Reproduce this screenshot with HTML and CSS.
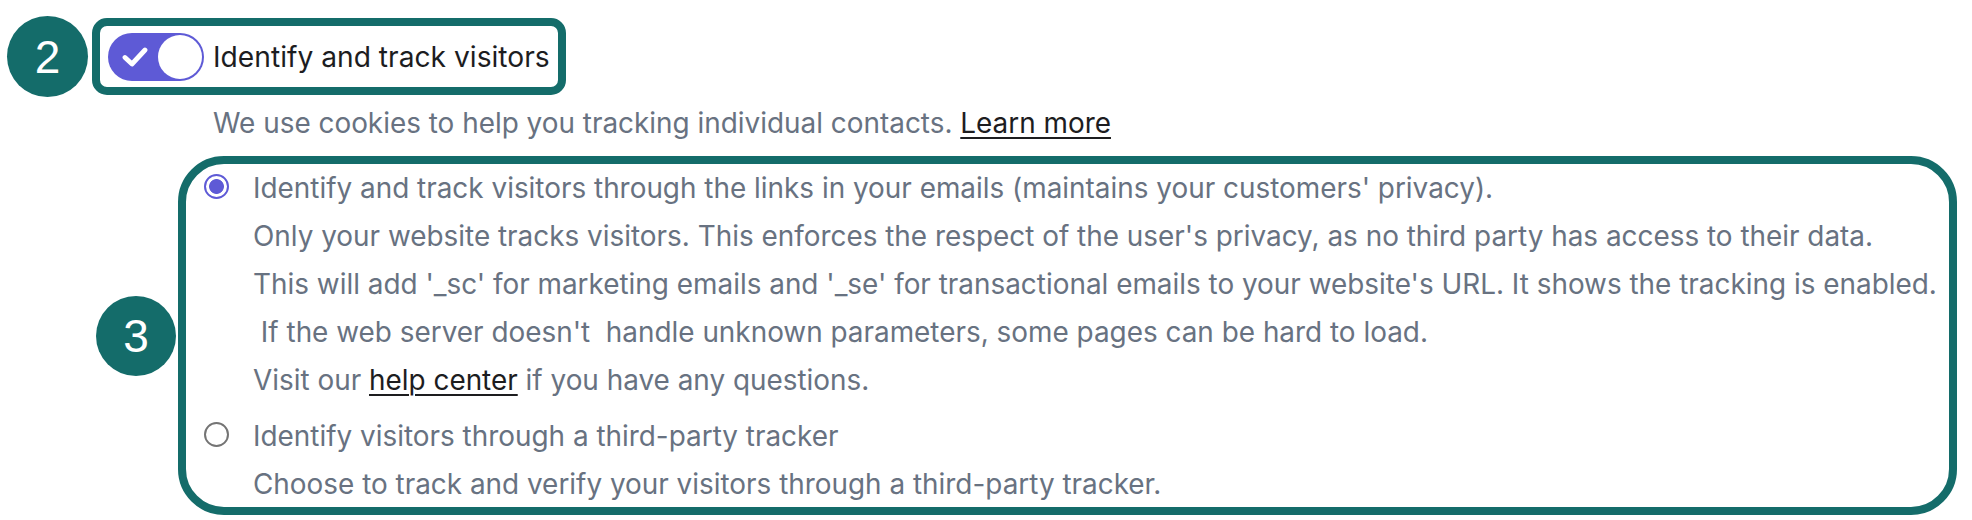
FILE: index.html
```html
<!DOCTYPE html>
<html lang="en">
<head>
<meta charset="utf-8">
<title>Tracking settings</title>
<link rel="stylesheet" href="styles.css">
</head>
<body>
<div class="page">
  <div class="row row-toggle">
    <span class="badge">2</span>
    <div class="hl hl-toggle">
      <span class="switch">
        <svg class="check" viewBox="0 0 26 22" width="26" height="22" aria-hidden="true">
          <path d="M3 11.5 L10 18 L23 4" fill="none" stroke="#ffffff" stroke-width="4.8" stroke-linecap="round" stroke-linejoin="round"/>
        </svg>
        <span class="knob"></span>
      </span>
      <span class="toggle-label">Identify and track visitors</span>
    </div>
  </div>
  <p class="desc">We use cookies to help you tracking individual contacts. <a class="link" href="#">Learn more</a></p>
  <div class="row row-options">
    <span class="badge">3</span>
    <div class="hl hl-options">
      <div class="option">
        <span class="radio checked"></span>
        <div class="option-text">
          <p class="line">Identify and track visitors through the links in your emails (maintains your customers' privacy).</p>
          <p class="line">Only your website tracks visitors. This enforces the respect of the user's privacy, as no third party has access to their data.</p>
          <p class="line">This will add '_sc' for marketing emails and '_se' for transactional emails to your website's URL. It shows the tracking is enabled.</p>
          <p class="line pre"> If the web server doesn't  handle unknown parameters, some pages can be hard to load.</p>
          <p class="line">Visit our <a class="link" href="#">help center</a> if you have any questions.</p>
        </div>
      </div>
      <div class="option option-second">
        <span class="radio"></span>
        <div class="option-text">
          <p class="line">Identify visitors through a third-party tracker</p>
          <p class="line">Choose to track and verify your visitors through a third-party tracker.</p>
        </div>
      </div>
    </div>
  </div>
</div>
</body>
</html>
```
FILE: styles.css
```css
* { box-sizing: border-box; }
html, body { margin: 0; padding: 0; background: #ffffff; }
body {
  font-family: Inter, "Noto Sans", "Liberation Sans", sans-serif;
  color: #687281;
  width: 1972px;
  height: 520px;
  overflow: hidden;
}
.page { display: flex; flex-direction: column; }
.row { display: flex; align-items: center; }
.row-toggle { margin-top: 16px; padding-left: 7px; gap: 4px; }
.row-options { padding-left: 96px; gap: 2px; margin-top: 9px; }
.badge {
  flex: none;
  width: 81px;
  height: 81px;
  border-radius: 50%;
  background: #146c6a;
  color: #ffffff;
  font-family: "Liberation Sans", Arial, sans-serif;
  font-size: 46px;
  display: flex;
  align-items: center;
  justify-content: center;
  line-height: 1;
}
.row-options .badge { width: 80px; height: 80px; }
.hl { border: 8px solid #146c6a; background: #ffffff; }
.hl-toggle {
  height: 77px;
  border-radius: 15px;
  display: flex;
  align-items: center;
  padding: 0 8px;
  gap: 9px;
}
.switch {
  flex: none;
  width: 96px;
  height: 48px;
  border-radius: 24px;
  background: #5e5ad6;
  display: flex;
  align-items: center;
  justify-content: space-between;
  padding: 0 2px 0 14px;
}
.check { display: block; }
.knob {
  width: 44px;
  height: 44px;
  border-radius: 50%;
  background: #ffffff;
}
.toggle-label { font-size: 28.2px; color: #1d1d1f; line-height: 48px; white-space: nowrap; }
.desc { margin: 2px 0 0 213px; font-size: 27.9px; line-height: 48px; white-space: nowrap; }
.link { color: #1d1d1f; text-decoration: underline; text-underline-offset: 4px; text-decoration-thickness: 2px; }
.hl-options {
  width: 1779px;
  height: 359px;
  border-radius: 46px;
  padding: 0 0 0 18px;
  display: flex;
  flex-direction: column;
}
.option { display: flex; gap: 24px; align-items: flex-start; }
.option-second { margin-top: 8px; }
.radio {
  flex: none;
  width: 25px;
  height: 25px;
  margin-top: 10px;
  border-radius: 50%;
  border: 2px solid #747474;
  background: #ffffff;
}
.radio.checked {
  border-color: #5e5ad6;
  background: radial-gradient(circle, #5e5ad6 0 7px, #ffffff 7.8px);
}
.option-text { display: flex; flex-direction: column; }
.line { margin: 0; font-size: 27.9px; line-height: 48px; white-space: nowrap; }
.pre { white-space: pre; }
```
